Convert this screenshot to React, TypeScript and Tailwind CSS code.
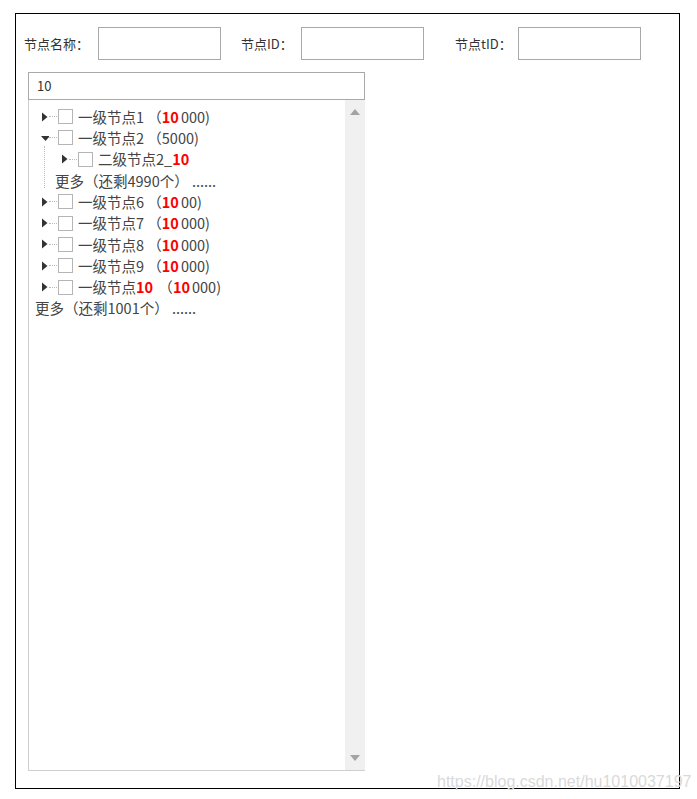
import React from 'react';

type Part = { t: string; red?: boolean };

interface TreeRow {
  level: number;
  kind: 'node' | 'more';
  open?: boolean;
  parts: Part[];
}

const rows: TreeRow[] = [
  { level: 0, kind: 'node', parts: [{ t: '一级节点1 （' }, { t: '10', red: true }, { t: '000)' }] },
  { level: 0, kind: 'node', open: true, parts: [{ t: '一级节点2 （5000)' }] },
  { level: 1, kind: 'node', parts: [{ t: '二级节点2_' }, { t: '10', red: true }] },
  { level: 1, kind: 'more', parts: [{ t: '更多（还剩4990个） ......' }] },
  { level: 0, kind: 'node', parts: [{ t: '一级节点6 （' }, { t: '10', red: true }, { t: '00)' }] },
  { level: 0, kind: 'node', parts: [{ t: '一级节点7 （' }, { t: '10', red: true }, { t: '000)' }] },
  { level: 0, kind: 'node', parts: [{ t: '一级节点8 （' }, { t: '10', red: true }, { t: '000)' }] },
  { level: 0, kind: 'node', parts: [{ t: '一级节点9 （' }, { t: '10', red: true }, { t: '000)' }] },
  { level: 0, kind: 'node', parts: [{ t: '一级节点' }, { t: '10', red: true }, { t: ' （' }, { t: '10', red: true }, { t: '000)' }] },
  { level: 0, kind: 'more', parts: [{ t: '更多（还剩1001个） ......' }] },
];

function Label({ parts }: { parts: Part[] }) {
  return (
    <span className="whitespace-pre">
      {parts.map((p, i) =>
        p.red ? (
          <span key={i} className="text-[#ff0000] font-bold mr-[2px]">{p.t}</span>
        ) : (
          <span key={i}>{p.t}</span>
        )
      )}
    </span>
  );
}

function Arrow({ open }: { open?: boolean }) {
  return (
    <svg width="8" height="10" viewBox="0 0 8 10" className="shrink-0">
      {open ? <path d="M0 3 L9 3 L4.5 8 Z" fill="#333" /> : <path d="M1 0.5 L6.5 5 L1 9.5 Z" fill="#333" />}
    </svg>
  );
}

function Row({ row }: { row: TreeRow }) {
  const indent = row.level * 20;
  if (row.kind === 'more') {
    return (
      <div className="h-[21.3px] flex items-center" style={{ paddingLeft: row.level === 0 ? 6 : indent + 6 }}>
        <Label parts={row.parts} />
      </div>
    );
  }
  return (
    <div className="h-[21.3px] flex items-center" style={{ paddingLeft: indent + 12 }}>
      <Arrow open={row.open} />
      <span className="w-[8px] border-t border-dotted border-[#bbb] shrink-0" />
      <span className="w-[15px] h-[15px] border border-[#b5b5b5] bg-white shrink-0 ml-[1px] mr-[5px]" />
      <Label parts={row.parts} />
    </div>
  );
}

export default function App() {
  return (
    <div className="w-[697px] h-[799px] bg-white pt-[13px] pl-[15px] relative" style={{ fontFamily: '"Noto Sans CJK SC", "Noto Sans", sans-serif' }}>
      <div className="w-[665px] h-[776px] border border-black pt-[13px] pl-[8px]">
        <div className="flex items-center text-[13px] text-[#333]">
          <span className="w-[74px]">节点名称：</span>
          <input className="w-[123px] h-[33px] border border-[#a9a9a9] outline-none" />
          <span className="w-[60px] ml-[20px]">节点ID：</span>
          <input className="w-[123px] h-[33px] border border-[#a9a9a9] outline-none" />
          <span className="w-[63px] ml-[31px]">节点tID：</span>
          <input className="w-[123px] h-[33px] border border-[#a9a9a9] outline-none" />
        </div>
        <div className="ml-[4px] mt-[12px] w-[337px]">
          <div className="h-[28px] border border-[#a9a9a9] flex items-center pl-[8px] text-[13px] text-[#333]">10</div>
          <div className="h-[671px] border-l border-b border-[#cfcfcf] flex">
            <div className="flex-1 pt-[6px] text-[14.5px] text-[#444] relative">
              <span className="absolute left-[15px] top-[46px] h-[42px] border-l border-dotted border-[#bbb]" />
              {rows.map((r, i) => (
                <Row key={i} row={r} />
              ))}
            </div>
            <div className="w-[20px] bg-[#f0f0f0] flex flex-col items-center justify-between py-[9px]">
              <svg width="10" height="6" viewBox="0 0 10 6">
                <path d="M0 6 L5 0 L10 6 Z" fill="#a3a3a3" />
              </svg>
              <svg width="10" height="6" viewBox="0 0 10 6">
                <path d="M0 0 L10 0 L5 6 Z" fill="#a3a3a3" />
              </svg>
            </div>
          </div>
        </div>
      </div>
      <span className="absolute left-[437px] top-[770px] text-[16px] text-[#d9d9d9]" style={{ fontFamily: '"Liberation Sans", Arial, sans-serif' }}>
        https://blog.csdn.net/hu1010037197
      </span>
    </div>
  );
}
